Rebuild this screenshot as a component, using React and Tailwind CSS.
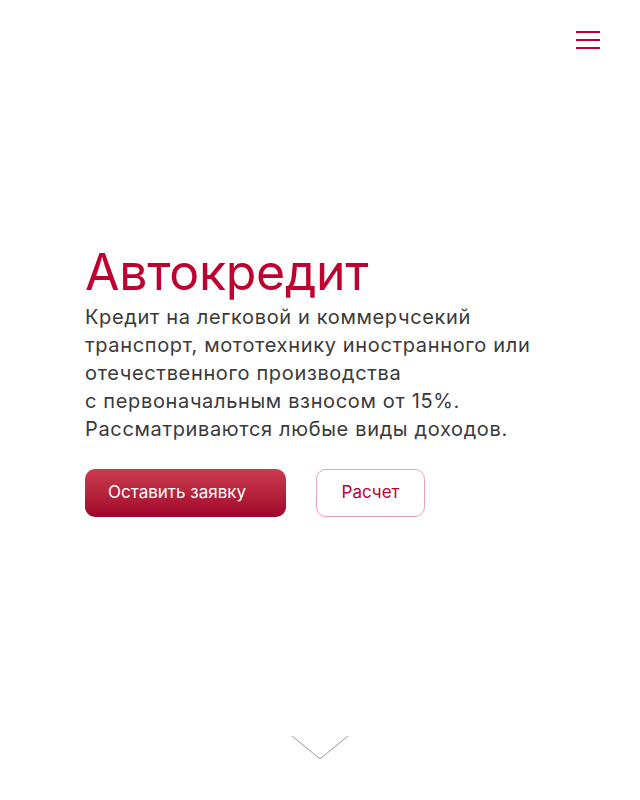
export default function App() {
  return (
    <div className="flex h-[800px] w-full flex-col bg-white font-['Inter','Liberation_Sans',sans-serif]">
      <header className="flex justify-end pr-10 pt-[31px]">
        <button className="flex w-6 flex-col gap-[6px]" aria-label="Меню">
          <span className="block h-[2px] w-6 bg-[#c0002f]"></span>
          <span className="block h-[2px] w-6 bg-[#c0002f]"></span>
          <span className="block h-[2px] w-6 bg-[#c0002f]"></span>
        </button>
      </header>

      <main className="flex-1 pl-[85px] pt-[196px]">
        <h1 className="text-[50px] leading-[55px] tracking-[-0.3px] text-[#c0002f]">
          Автокредит
        </h1>
        <p className="mt-[3px] text-[20px] leading-[28px] tracking-[0.65px] text-[#3a3a3a]">
          Кредит на легковой и коммерчсекий
          <br />
          транспорт, мототехнику иностранного или
          <br />
          отечественного производства
          <br />
          с первоначальным взносом от 15%.
          <br />
          Рассматриваются любые виды доходов.
        </p>

        <div className="mt-[26px] flex gap-[30px]">
          <button className="h-12 w-[201px] rounded-[10px] bg-gradient-to-b from-[#cc3a4f] to-[#a0002a] pl-[23px] text-left text-[17px] text-white">
            Оставить заявку
          </button>
          <button className="h-12 w-[109px] rounded-[10px] border border-[#eaa3b4] text-[17px] text-[#c0002f]">
            Расчет
          </button>
        </div>
      </main>

      <footer className="flex justify-center pb-[39px]">
        <svg width="58" height="26" viewBox="0 0 58 26" fill="none">
          <polyline
            points="1,1 29,24 57,1"
            stroke="#9a9a9a"
            strokeWidth="1"
          />
        </svg>
      </footer>
    </div>
  );
}
